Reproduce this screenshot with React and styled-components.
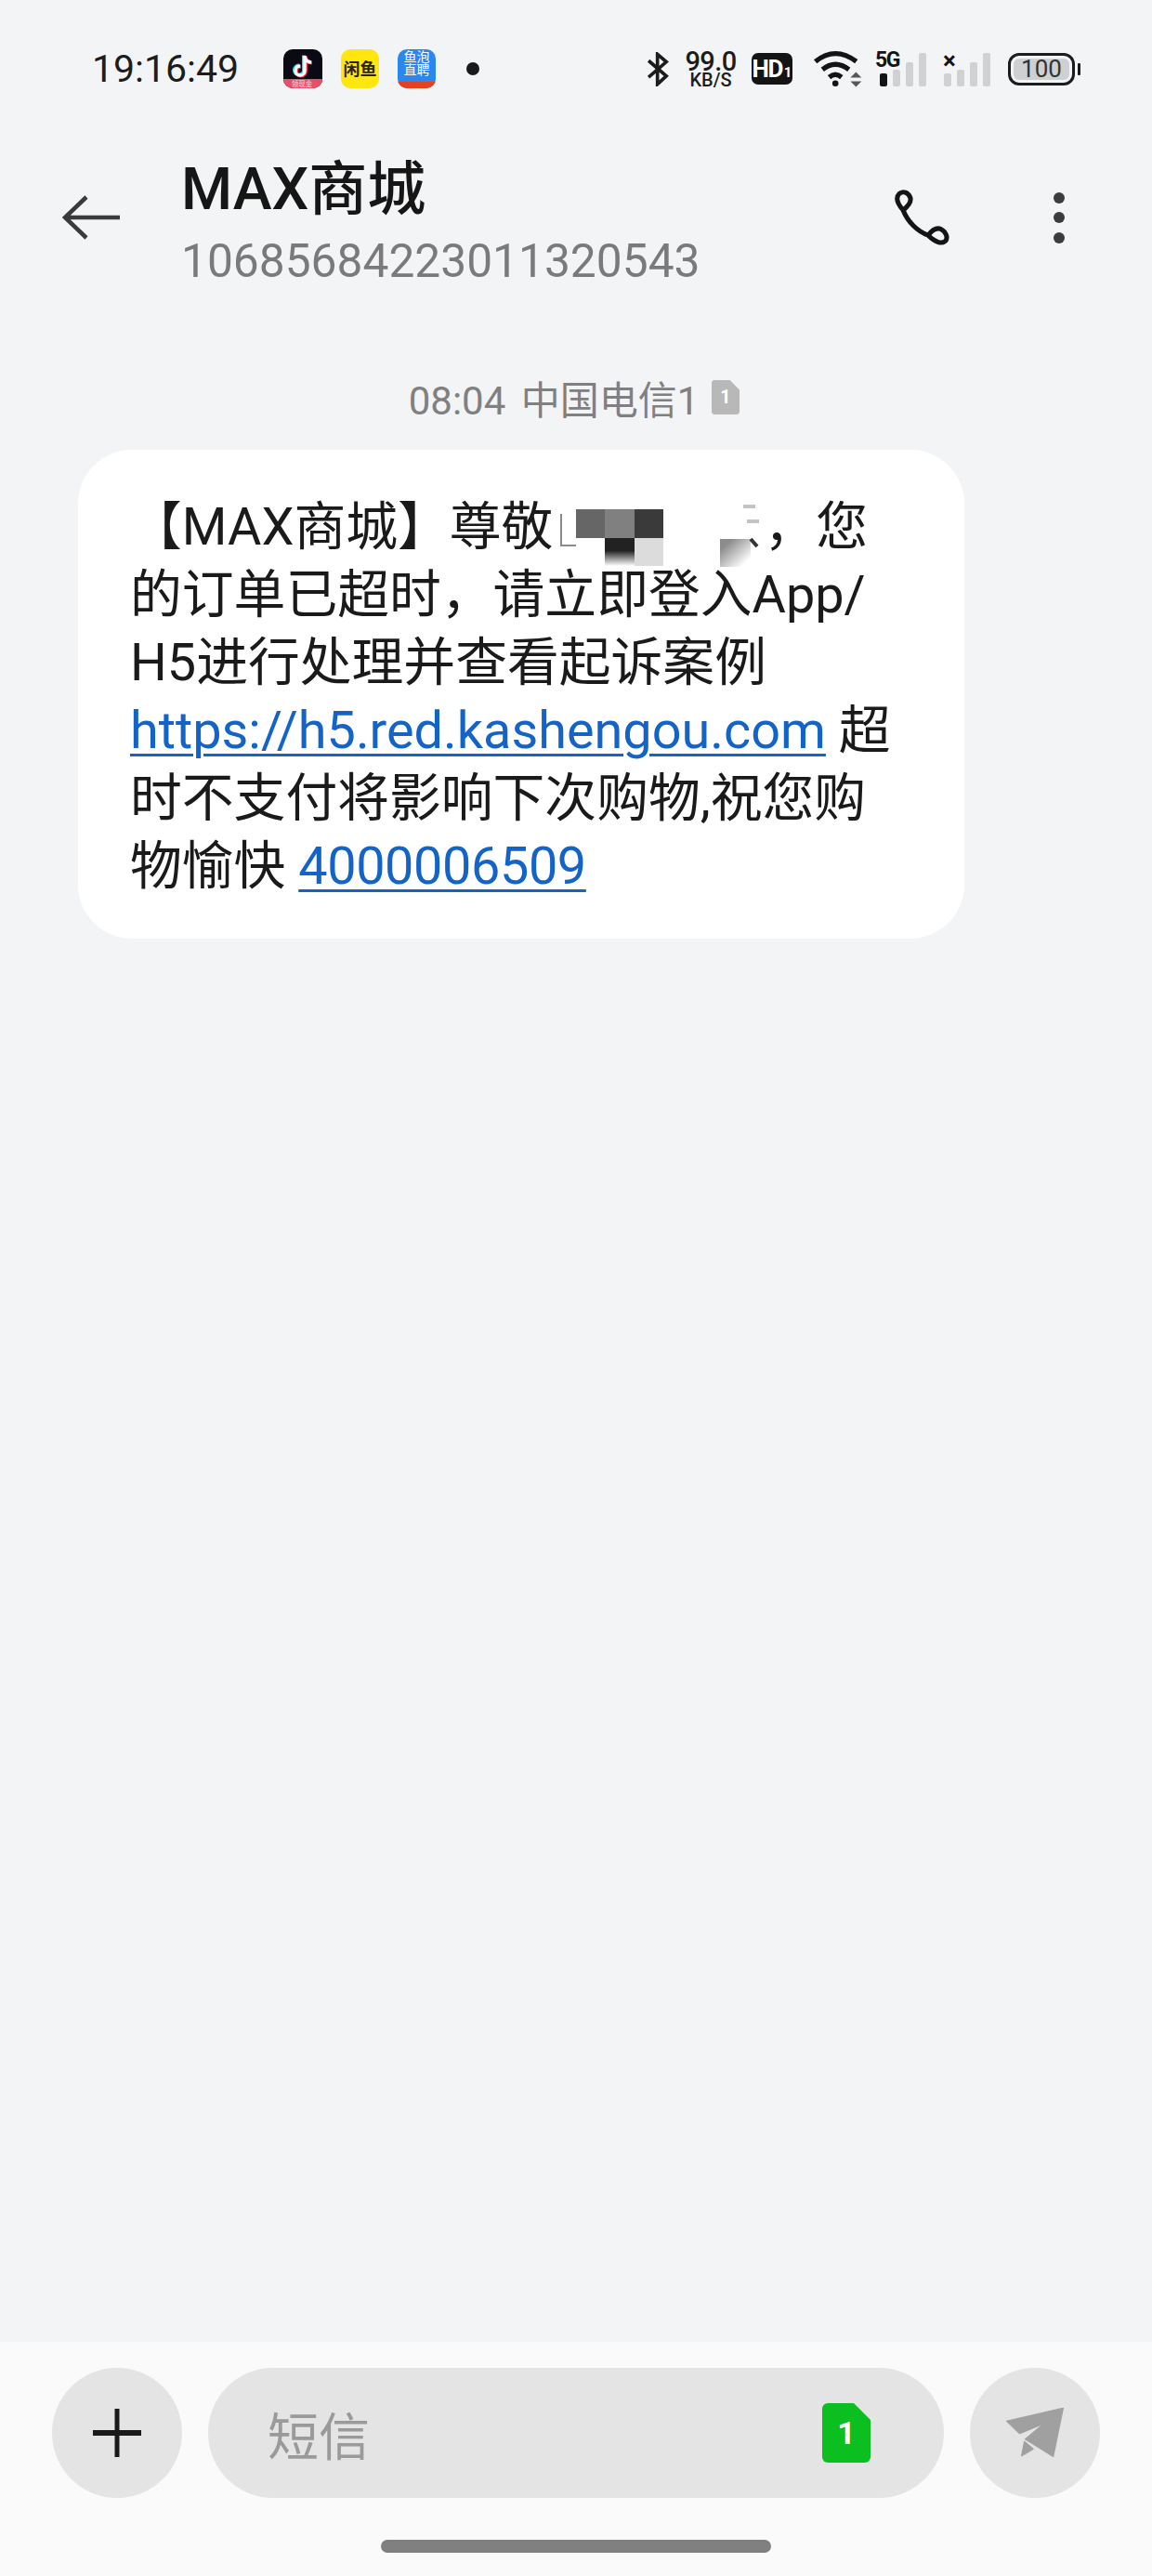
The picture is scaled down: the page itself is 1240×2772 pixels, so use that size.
import React from 'react';
import styled, { createGlobalStyle } from 'styled-components';

const FONT = `Roboto, "Noto Sans CJK SC", sans-serif`;

const Global = createGlobalStyle`
  html, body { margin: 0; padding: 0; background: #f3f4f6; }
  body { font-family: ${FONT}; }
`;

const Page = styled.div`
  width: 1240px;
  height: 2772px;
  display: flex;
  flex-direction: column;
  background: #f3f4f6;
  color: #1a1a1a;
  overflow: hidden;
`;

/* ---------- status bar ---------- */
const StatusBar = styled.div`
  height: 148px;
  flex: none;
  box-sizing: border-box;
  padding: 0 77px 0 99px;
  display: flex;
  align-items: center;
  justify-content: space-between;
`;
const StatusLeft = styled.div`
  display: flex;
  align-items: center;
`;
const Clock = styled.div`
  font-size: 41px;
  line-height: 48px;
  width: 156px;
  margin-right: 50px;
  white-space: nowrap;
  color: #1c1c1c;
`;
const AppIcons = styled.div`
  display: flex;
  gap: 20px;
  align-items: center;
`;
const YupaoBadge = styled.div`
  position: relative;
  width: 41px;
  height: 42px;
  border-radius: 10px;
  overflow: hidden;
  background: #2a87ee;
  color: #fff;
  font-size: 14px;
  line-height: 13.5px;
  text-align: center;
  box-sizing: border-box;
  padding: 2px 6px 0;
  &::after {
    content: '';
    position: absolute;
    left: -6px;
    right: -6px;
    top: 29px;
    height: 24px;
    border-radius: 50% 50% 0 0 / 30% 30% 0 0;
    background: #e6401f;
    transform: scaleY(-1) translateY(-6px);
  }
`;
const NotifDot = styled.span`
  width: 14px;
  height: 14px;
  border-radius: 50%;
  background: #1a1a1a;
  margin-left: 33px;
`;
const StatusRight = styled.div`
  display: flex;
  align-items: center;
`;
const Speed = styled.div`
  width: 56px;
  margin-left: 17px;
  display: flex;
  flex-direction: column;
  align-items: center;
  color: #1c1c1c;
`;
const SpeedValue = styled.span`
  font-size: 29px;
  line-height: 24px;
  font-weight: 500;
  letter-spacing: -0.6px;
`;
const SpeedUnit = styled.span`
  font-size: 20px;
  line-height: 17px;
  font-weight: 500;
`;
const HdBadge = styled.div`
  width: 44px;
  height: 34px;
  margin-left: 16px;
  border-radius: 7px;
  background: #141414;
  color: #fff;
  display: flex;
  align-items: baseline;
  justify-content: center;
  font-weight: 700;
  font-size: 26px;
  line-height: 34px;
  letter-spacing: -1.5px;
`;
const HdSub = styled.span`
  font-size: 15px;
  letter-spacing: 0;
  margin-left: 2px;
`;
const WifiWrap = styled.div`
  margin-left: 23px;
  display: flex;
`;
const Signal = styled.div`
  position: relative;
  display: flex;
  align-items: flex-end;
  gap: 6px;
  height: 36px;
  margin-left: ${p => p.$ml}px;
  margin-top: 2px;
`;
const Bar = styled.span`
  width: 8px;
  height: ${p => p.$h}px;
  border-radius: 2px;
  background: ${p => (p.$on ? '#141414' : '#d0d1d3')};
`;
const FiveG = styled.span`
  position: absolute;
  left: -5px;
  top: -3px;
  font-size: 23px;
  line-height: 22px;
  font-weight: 700;
  letter-spacing: -1.5px;
  color: #141414;
`;
const NoService = styled.span`
  position: absolute;
  left: -1px;
  top: 0;
  font-size: 26px;
  line-height: 16px;
  font-weight: 700;
  color: #141414;
`;
const Battery = styled.div`
  display: flex;
  align-items: center;
  margin-left: 19px;
`;
const BatteryShell = styled.div`
  width: 72px;
  height: 35px;
  box-sizing: border-box;
  border: 3px solid #1c1c1c;
  border-radius: 12px;
  padding: 3px;
  display: flex;
`;
const BatteryFill = styled.div`
  flex: 1;
  background: #cfd0d2;
  border-radius: 6px;
  font-size: 26px;
  line-height: 23px;
  text-align: center;
  color: #333;
`;
const BatteryNub = styled.span`
  width: 3px;
  height: 13px;
  margin-left: 3px;
  background: #1c1c1c;
  border-radius: 1px;
`;

/* ---------- header ---------- */
const Header = styled.header`
  height: 172px;
  flex: none;
  box-sizing: border-box;
  padding: 0 94px 0 67px;
  display: flex;
  align-items: center;
`;
const TitleBlock = styled.div`
  margin-left: 66px;
  flex: 1;
  min-width: 0;
`;
const Title = styled.div`
  font-size: 63px;
  line-height: 78px;
  font-weight: 500;
  color: #161616;
  margin-top: 7px;
`;
const Subtitle = styled.div`
  font-size: 49.7px;
  line-height: 60px;
  color: #7a7a7a;
  margin-top: 8px;
`;
const HeaderActions = styled.div`
  display: flex;
  align-items: center;
  gap: 112px;
`;
const Dots = styled.div`
  display: flex;
  flex-direction: column;
  gap: 9.5px;
`;
const Dot = styled.span`
  width: 12px;
  height: 12px;
  border-radius: 50%;
  background: #3c3c3c;
`;

/* ---------- conversation ---------- */
const Stamp = styled.div`
  margin-top: 82px;
  height: 50px;
  display: flex;
  align-items: center;
  justify-content: center;
  gap: 14px;
  padding-right: 4px;
  font-size: 42px;
  word-spacing: 6px;
  color: #808080;
`;
const Bubble = styled.div`
  margin: 32px 0 0 84px;
  width: 954px;
  height: 526px;
  box-sizing: border-box;
  padding: 47px 0 0 56px;
  background: #fff;
  border-radius: 58px;
  font-size: 55.8px;
  line-height: 73px;
  color: #1a1a1a;
`;
const Line = styled.div`
  white-space: nowrap;
  height: 73px;
`;
const Link = styled.a`
  color: #1464c8;
  text-decoration: underline;
  text-decoration-thickness: 3px;
  text-underline-offset: 6px;
  letter-spacing: ${p => p.$tight ? '-0.4px' : '0'};
`;
const Mosaic = styled.svg`
  display: inline-block;
  vertical-align: top;
  overflow: visible;
`;
const Spacer = styled.div`
  flex: 1;
`;

/* ---------- composer ---------- */
const Composer = styled.div`
  height: 252px;
  flex: none;
  box-sizing: border-box;
  background: #fafafa;
  padding-top: 28px;
  display: flex;
  flex-direction: column;
  align-items: center;
`;
const ComposerRow = styled.div`
  width: 1128px;
  display: flex;
  align-items: center;
  gap: 28px;
`;
const RoundButton = styled.div`
  width: 140px;
  height: 140px;
  flex: none;
  border-radius: 50%;
  background: #e4e4e4;
  display: flex;
  align-items: center;
  justify-content: center;
`;
const InputPill = styled.div`
  flex: 1;
  height: 140px;
  box-sizing: border-box;
  border-radius: 70px;
  background: #e4e4e4;
  padding: 0 79px 0 64px;
  display: flex;
  align-items: center;
  justify-content: space-between;
`;
const Placeholder = styled.span`
  font-size: 55px;
  color: #9a9a9a;
`;
const HomeIndicator = styled.div`
  width: 420px;
  height: 14px;
  border-radius: 7px;
  background: #808080;
  margin-top: 45px;
`;

/* ---------- drawings ---------- */
const TikTokIcon = () => (
  <svg width="42" height="42" viewBox="0 0 42 42">
    <defs><clipPath id="ttc"><rect width="42" height="42" rx="10" /></clipPath></defs>
    <g clipPath="url(#ttc)">
      <rect width="42" height="42" fill="#0b0a14" />
      <rect y="32" width="42" height="10" fill="#e8506a" />
      <path d="M23 7v16a5 5 0 1 1-5-5M23 7c0 4 3 7 7 7" fill="none" stroke="#25e0e8" strokeWidth="4" transform="translate(-1 -.5)" />
      <path d="M23 7v16a5 5 0 1 1-5-5M23 7c0 4 3 7 7 7" fill="none" stroke="#fe2c55" strokeWidth="4" transform="translate(1 .5)" />
      <path d="M23 7v16a5 5 0 1 1-5-5M23 7c0 4 3 7 7 7" fill="none" stroke="#fff" strokeWidth="3.4" />
      <text x="20" y="40" fontSize="7.5" fill="#ffd9de" textAnchor="middle" fontFamily={FONT}>领现金</text>
    </g>
  </svg>
);
const XianyuIcon = () => (
  <svg width="41" height="42" viewBox="0 0 41 42">
    <rect width="41" height="42" rx="10" fill="#ffe60f" />
    <text x="20.5" y="27.5" fontSize="18" fontWeight="700" fill="#2b2413" textAnchor="middle" fontFamily={FONT}>闲鱼</text>
  </svg>
);
const BluetoothIcon = () => (
  <svg width="24" height="37" viewBox="50 48 72 112">
    <path d="M56 76 L114 126 L85 153 V55 L114 80 L56 130" fill="none" stroke="#1c1c1c" strokeWidth="11" />
  </svg>
);
const WifiIcon = () => (
  <svg width="53" height="41" viewBox="590 40 160 122">
    <g fill="none" stroke="#141414" strokeWidth="16">
      <path d="M595 76 Q660 24 728 76" />
      <path d="M618 102 Q660 68 704 102" />
      <path d="M640 127 Q660 110 680 127" />
    </g>
    <circle cx="660" cy="147" r="10" fill="#141414" />
    <path d="M727 110 L745 128 H709Z M709 140 H745 L727 158Z" fill="#56575a" />
  </svg>
);
const BackArrow = () => (
  <svg width="62" height="48" viewBox="0 0 62 48">
    <path d="M62 24 H4 M26 2 L3 24 L26 46" fill="none" stroke="#3a3a3a" strokeWidth="4.5" />
  </svg>
);
const PhoneIcon = () => (
  <svg width="60" height="60" viewBox="75 72 178 178">
    <path
      d="M105 138 C90 120 78 100 92 86 C105 74 122 82 128 98 C132 112 122 124 105 138 C120 175 150 205 185 218 C195 205 210 192 225 198 C240 205 250 225 240 236 C228 248 205 238 185 218"
      fill="none" stroke="#141414" strokeWidth="15" strokeLinejoin="round"
    />
  </svg>
);
const SimIcon = ({ w, h, fill, num, size }) => (
  <svg width={w} height={h} viewBox="0 0 52 64">
    <path d="M6 0 H34 L52 18 V58 a6 6 0 0 1 -6 6 H6 a6 6 0 0 1 -6 -6 V6 a6 6 0 0 1 6 -6Z" fill={fill} />
    <text x="26" y="44" fontSize={size} fontWeight="700" fill="#fff" textAnchor="middle" fontFamily={FONT}>{num}</text>
  </svg>
);
const PlusIcon = () => (
  <svg width="52" height="52" viewBox="0 0 52 52">
    <rect x="23.5" y="0" width="5" height="52" fill="#1a1a1a" />
    <rect x="0" y="23" width="52" height="6" fill="#1a1a1a" />
  </svg>
);
const SendIcon = () => (
  <svg width="64" height="54" viewBox="725 100 192 160">
    <path d="M730 142 L912 100 L880 256 L790 200 L850 150 L772 182Z" fill="#a0a0a0" stroke="#a0a0a0" strokeWidth="4" strokeLinejoin="round" />
    <path d="M787 208 L815 232 L778 254Z" fill="#a0a0a0" stroke="#a0a0a0" strokeWidth="4" strokeLinejoin="round" />
  </svg>
);
/* the pixelated patch that hides the recipient's name */
const NameMosaic = () => (
  <Mosaic width="227" height="73" viewBox="595 531 227 73">
    <defs>
      <linearGradient id="fadeDark" x1="0" y1="0" x2="0" y2="1">
        <stop offset="0.45" stopColor="#222" />
        <stop offset="1" stopColor="#fff" />
      </linearGradient>
      <linearGradient id="fadeGrey" x1="0" y1="0" x2="1" y2="1">
        <stop offset="0.2" stopColor="#8c8c8c" />
        <stop offset="0.85" stopColor="#fff" />
      </linearGradient>
    </defs>
    <rect x="620" y="548" width="31" height="31" fill="#666" />
    <rect x="651" y="548" width="32" height="31" fill="#808080" />
    <rect x="683" y="548" width="31" height="31" fill="#3a3a3a" />
    <rect x="651" y="579" width="32" height="30" fill="url(#fadeDark)" />
    <rect x="683" y="579" width="31" height="30" fill="#dcdcdc" />
    <rect x="775" y="580" width="33" height="30" fill="url(#fadeGrey)" />
    <path d="M604 553 V587 H620" fill="none" stroke="#8a8a8a" strokeWidth="2" />
    <path d="M800 545 H813 M804 561 H817" stroke="#c4c4c4" strokeWidth="4" />
    <path d="M808 580 L815 588" stroke="#333" strokeWidth="4" />
  </Mosaic>
);

export default function App() {
  return (
    <Page>
      <Global />
      <StatusBar>
        <StatusLeft>
          <Clock>19:16:49</Clock>
          <AppIcons>
            <TikTokIcon />
            <XianyuIcon />
            <YupaoBadge>鱼泡直聘</YupaoBadge>
          </AppIcons>
          <NotifDot />
        </StatusLeft>
        <StatusRight>
          <BluetoothIcon />
          <Speed>
            <SpeedValue>99.0</SpeedValue>
            <SpeedUnit>KB/S</SpeedUnit>
          </Speed>
          <HdBadge>HD<HdSub>1</HdSub></HdBadge>
          <WifiWrap><WifiIcon /></WifiWrap>
          <Signal $ml={18}>
            <FiveG>5G</FiveG>
            <Bar $h={14} $on />
            <Bar $h={18} />
            <Bar $h={26} />
            <Bar $h={36} />
          </Signal>
          <Signal $ml={19}>
            <NoService>×</NoService>
            <Bar $h={14} />
            <Bar $h={18} />
            <Bar $h={26} />
            <Bar $h={36} />
          </Signal>
          <Battery>
            <BatteryShell><BatteryFill>100</BatteryFill></BatteryShell>
            <BatteryNub />
          </Battery>
        </StatusRight>
      </StatusBar>

      <Header>
        <BackArrow />
        <TitleBlock>
          <Title>MAX商城</Title>
          <Subtitle>10685684223011320543</Subtitle>
        </TitleBlock>
        <HeaderActions>
          <PhoneIcon />
          <Dots><Dot /><Dot /><Dot /></Dots>
        </HeaderActions>
      </Header>

      <Stamp>
        <span>08:04 中国电信1</span>
        <SimIcon w={30} h={37} fill="#b8b8b8" num="1" size={34} />
      </Stamp>

      <Bubble>
        <Line>【MAX商城】尊敬<NameMosaic />，您</Line>
        <Line>的订单已超时，请立即登入App/</Line>
        <Line>H5进行处理并查看起诉案例</Line>
        <Line><Link>https://h5.red.kashengou.com</Link> 超</Line>
        <Line>时不支付将影响下次购物,祝您购</Line>
        <Line>物愉快 <Link $tight>4000006509</Link></Line>
      </Bubble>

      <Spacer />

      <Composer>
        <ComposerRow>
          <RoundButton><PlusIcon /></RoundButton>
          <InputPill>
            <Placeholder>短信</Placeholder>
            <SimIcon w={52} h={64} fill="#0abf1f" num="1" size={34} />
          </InputPill>
          <RoundButton><SendIcon /></RoundButton>
        </ComposerRow>
        <HomeIndicator />
      </Composer>
    </Page>
  );
}
